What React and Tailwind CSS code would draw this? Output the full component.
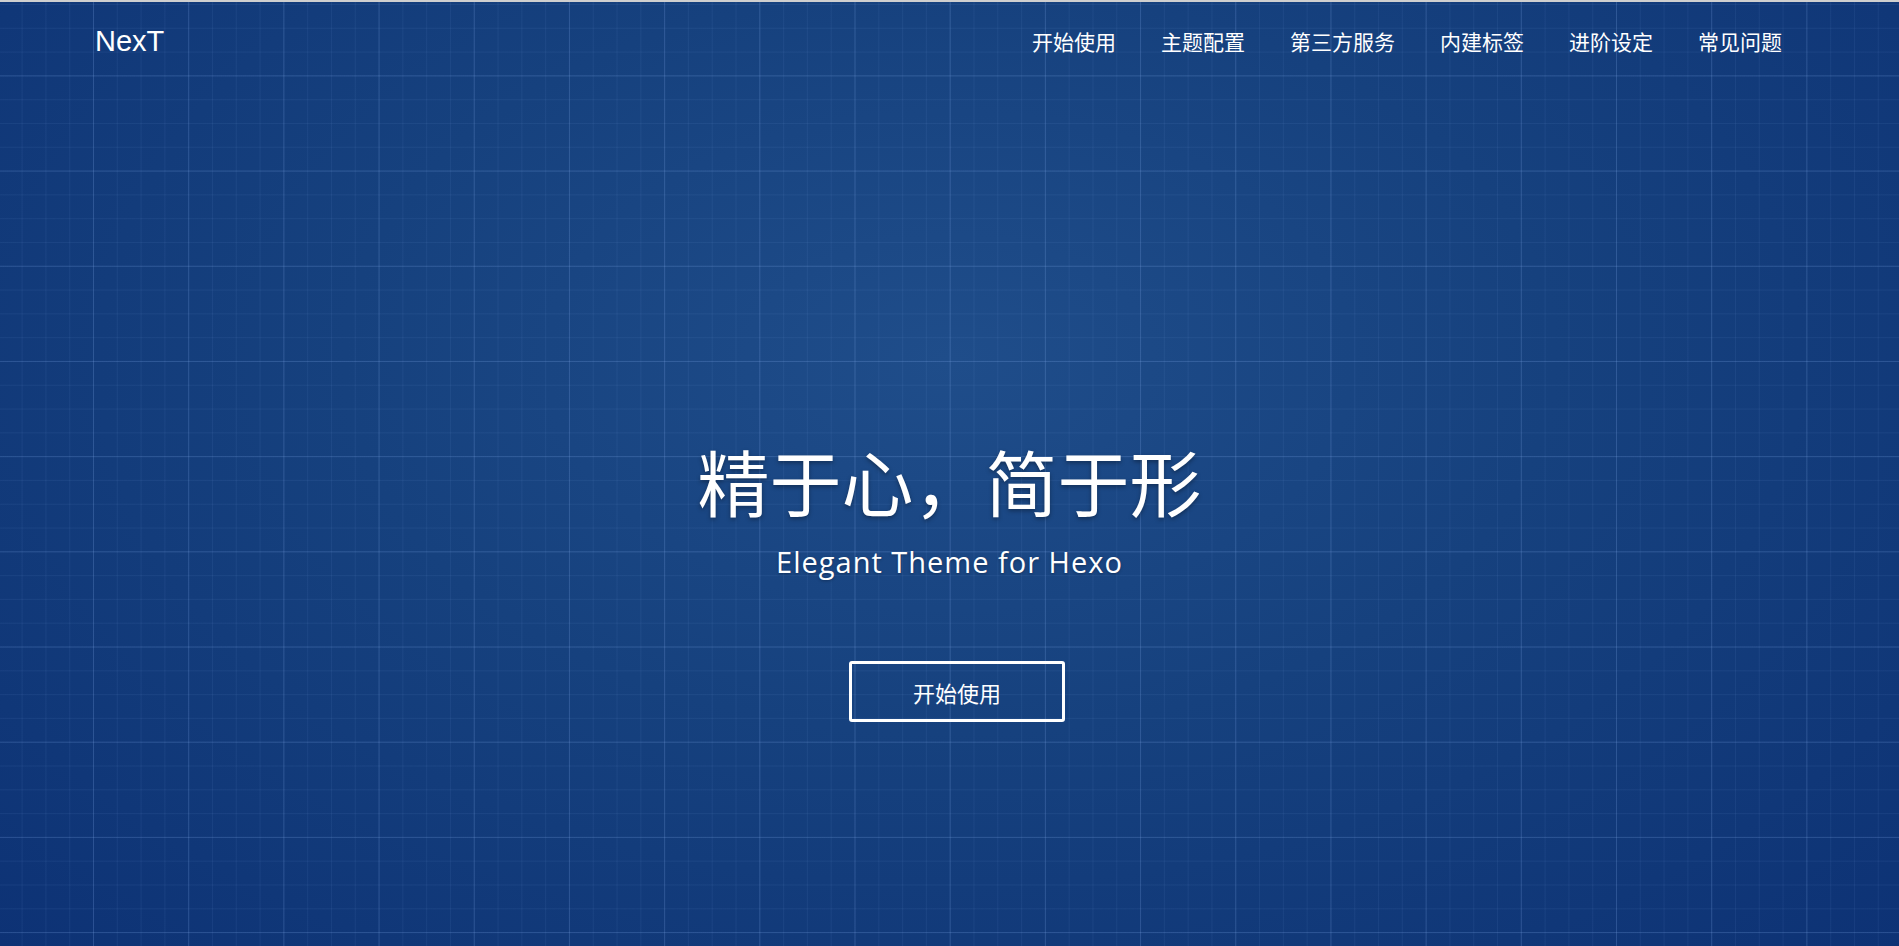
export default function App() {
  const nav = ["开始使用", "主题配置", "第三方服务", "内建标签", "进阶设定", "常见问题"];
  const cjk = "font-['Noto_Sans_CJK_SC','Noto_Sans',sans-serif]";
  return (
    <div
      className={`w-full h-[946px] overflow-hidden border-t-2 border-[#cfcfcf] flex flex-col text-white bg-[linear-gradient(to_right,rgba(125,165,230,0.19)_1px,transparent_1px),linear-gradient(to_bottom,rgba(125,165,230,0.19)_1px,transparent_1px),linear-gradient(to_right,rgba(125,165,230,0.085)_1px,transparent_1px),linear-gradient(to_bottom,rgba(125,165,230,0.085)_1px,transparent_1px),radial-gradient(ellipse_at_50%_38%,#1f4d8a_0%,#16417e_45%,#0d3275_100%)] [background-size:95.2px_95.2px,95.2px_95.2px,23.8px_23.8px,23.8px_23.8px,100%_100%] [background-position:93px_0,0_73.4px,93px_0,0_73.4px,0_0]`}
    >
      <header className="h-[78px] flex items-center justify-between pl-[95px] pr-[117px]">
        <a className="font-['Liberation_Sans',Arial,sans-serif] text-[29px] leading-none text-white">NexT</a>
        <nav className={`flex items-center gap-[45px] ${cjk} text-[21px] leading-none`}>
          {nav.map((n) => (
            <a key={n} className="text-white whitespace-nowrap">{n}</a>
          ))}
        </nav>
      </header>
      <main className="flex flex-col items-center">
        <h1
          className={`mt-[364px] ${cjk} text-[72px] leading-none font-normal whitespace-nowrap [text-shadow:0_2px_4px_rgba(0,0,0,0.35)]`}
        >
          精于心，简于形
        </h1>
        <p className="mt-[31px] font-['Open_Sans','Noto_Sans',sans-serif] text-[29px] leading-none tracking-[1px] [text-shadow:0_1px_3px_rgba(0,0,0,0.3)]">
          Elegant Theme for Hexo
        </p>
        <a
          className={`mt-[85px] ml-[15px] w-[216px] h-[61px] flex items-center justify-center border-[3px] border-white rounded-[3px] ${cjk} text-[22px] leading-none text-white`}
        >
          开始使用
        </a>
      </main>
    </div>
  );
}
